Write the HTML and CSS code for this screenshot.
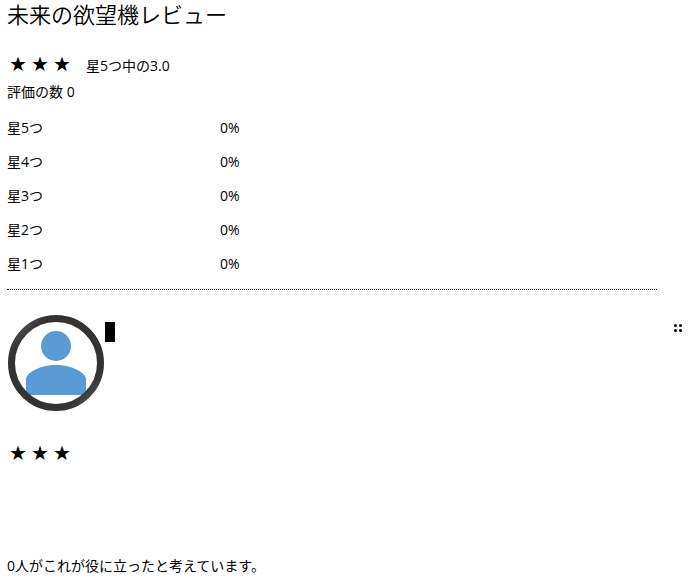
FILE: index.html
```html
<!DOCTYPE html>
<html lang="ja">
<head>
    <meta charset="UTF-8">
    <meta name="viewport" content="width=device-width, initial-scale=1.0">
    <title>未来の欲望機レビュー</title>
    <link rel="stylesheet" href="styles.css">
</head>
<body>
    <h1>未来の欲望機レビュー</h1>

    <section class="summary">
        <div class="score">
            <div class="stars"><span>★</span><span>★</span><span>★</span></div>
            <span>星5つ中の3.0</span>
        </div>
        <p class="count">評価の数 0</p>
        <table class="ratings">
            <tr><th scope="row">星5つ</th><td>0%</td></tr>
            <tr><th scope="row">星4つ</th><td>0%</td></tr>
            <tr><th scope="row">星3つ</th><td>0%</td></tr>
            <tr><th scope="row">星2つ</th><td>0%</td></tr>
            <tr><th scope="row">星1つ</th><td>0%</td></tr>
        </table>
    </section>

    <article class="review">
        <header class="author">
            <svg class="avatar" viewBox="0 0 96 96" role="img" aria-label="ユーザー">
                <defs>
                    <linearGradient id="ring" x1="0" y1="0" x2="1" y2="1">
                        <stop offset="0" stop-color="#333"/>
                        <stop offset="0.14" stop-color="#444"/>
                        <stop offset="0.2" stop-color="#333"/>
                        <stop offset="0.8" stop-color="#333"/>
                        <stop offset="0.87" stop-color="#444"/>
                        <stop offset="1" stop-color="#333"/>
                    </linearGradient>
                </defs>
                <circle cx="48" cy="31" r="15" fill="#5b9bd5"/>
                <path d="M18 80V64C18 58 32 50 48 50S78 58 78 64V80Z" fill="#5b9bd5"/>
                <circle cx="48" cy="48" r="44.5" fill="none" stroke="url(#ring)" stroke-width="7"/>
            </svg>
            <span class="name"></span>
            <button type="button" class="menu" aria-label="メニュー">
                <svg viewBox="0 0 8 8">
                    <circle cx="1.5" cy="1.5" r="1.5"/>
                    <circle cx="6.5" cy="1.5" r="1.5"/>
                    <circle cx="1.5" cy="6.5" r="1.5"/>
                    <circle cx="6.5" cy="6.5" r="1.5"/>
                </svg>
            </button>
        </header>
        <div class="stars"><span>★</span><span>★</span><span>★</span></div>
        <p class="helpful">0人がこれが役に立ったと考えています。</p>
    </article>
</body>
</html>
```
FILE: styles.css
```css
body {
    font-family: "Open Sans", "Noto Sans CJK JP", sans-serif;
    font-size: 14px;
    line-height: 24px;
    color: #000;
    background-color: #fff;
    margin: 0;
    padding: 0 7px;
}

h1 {
    font-size: 22px;
    font-weight: 350;
    line-height: 28px;
    margin: 0 0 24px;
}

p {
    margin: 0;
}

.summary {
    margin-right: 29px;
    padding-bottom: 8px;
    border-bottom: 1px dotted #000;
}

.score {
    display: flex;
    gap: 13px;
    height: 28px;
    align-items: baseline;
}

.stars {
    display: flex;
    font-family: "DejaVu Sans", sans-serif;
    font-size: 20px;
}

.stars span {
    width: 22px;
    text-align: center;
}

.ratings {
    margin-top: 7px;
    border-collapse: collapse;
}

.ratings th {
    width: 213px;
    padding: 0;
    font-weight: normal;
    text-align: left;
}

.ratings td {
    height: 34px;
    padding: 0;
}

.review {
    margin-top: 25px;
}

.author {
    display: flex;
    align-items: flex-start;
    margin-bottom: 30px;
}

.avatar {
    width: 96px;
    height: 96px;
    margin-left: 1px;
}

.name {
    width: 10px;
    height: 20px;
    margin: 7px 0 0 1px;
    background-color: #000;
}

.menu {
    width: 8px;
    height: 8px;
    margin: 9px 4px 0 auto;
    padding: 0;
    border: none;
    background: none;
    cursor: pointer;
}

.menu svg {
    display: block;
}

.helpful {
    margin-top: 89px;
}
```
